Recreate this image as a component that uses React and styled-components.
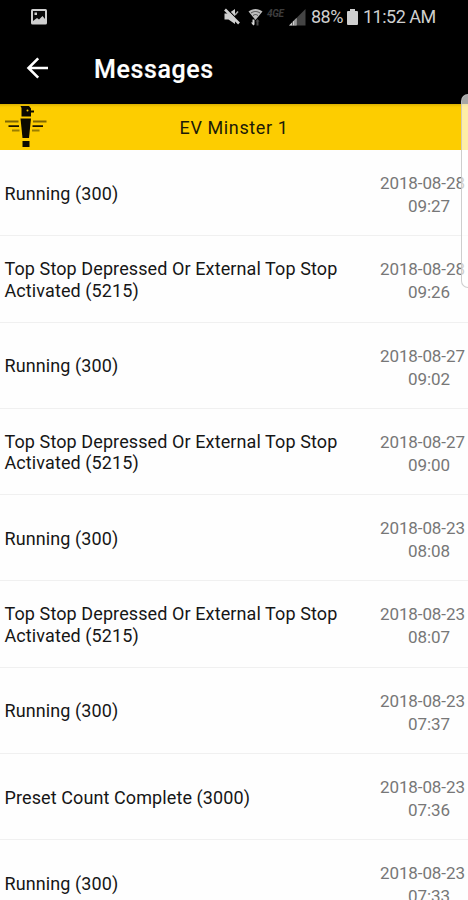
import React from 'react';
import styled, { createGlobalStyle } from 'styled-components';

const GlobalStyle = createGlobalStyle`
  * {
    box-sizing: border-box;
  }

  html, body {
    margin: 0;
    overflow: hidden;
    background: #fff;
  }
`;

const Screen = styled.div`
  position: relative;
  width: 468px;
  height: 900px;
  overflow: hidden;
  background: #fefefe;
  font-family: Roboto, sans-serif;
`;

const StatusBar = styled.div`
  display: flex;
  align-items: center;
  justify-content: space-between;
  height: 34px;
  padding: 0 32px 0 30px;
  background: #000;
  color: #cfcfcf;

  svg {
    display: block;
    flex: none;
  }
`;

const StatusGroup = styled.div`
  display: flex;
  align-items: center;
`;

const StatusIcon = styled.span`
  margin-right: ${({ $gap }) => $gap}px;
`;

const StatusText = styled.span`
  width: ${({ $width }) => $width}px;
  font-size: 18px;
  line-height: 20px;
  letter-spacing: -0.5px;
  white-space: nowrap;
`;

const NetworkLabel = styled.span`
  width: 20px;
  margin: 0 2px 7px 0;
  color: #3d3d3d;
  font-size: 10px;
  font-style: italic;
  font-weight: 700;
  line-height: 9px;
  letter-spacing: -0.3px;
`;

const AppBar = styled.header`
  display: flex;
  align-items: center;
  height: 70px;
  padding: 0 0 0 26px;
  background: #000;
  color: #fff;
`;

const BackButton = styled.button`
  width: 24px;
  height: 24px;
  margin: 0 44px 2px 0;
  padding: 0;
  border: 0;
  background: none;
  color: inherit;

  svg {
    display: block;
  }
`;

const Title = styled.h1`
  margin: 1px 0 0;
  font-size: 25px;
  font-weight: 500;
  line-height: 30px;
  letter-spacing: 0.6px;
  -webkit-text-stroke: 0.2px currentColor;
`;

const MachineBar = styled.div`
  display: grid;
  grid-template-columns: 50px 1fr 50px;
  align-items: center;
  height: 46px;
  background: linear-gradient(#d9b000, #fbcb00 3px, #fdcd00 6px);
  color: #1c1a08;

  svg {
    display: block;
  }
`;

const MachineName = styled.div`
  padding-top: 2px;
  font-size: 18px;
  line-height: 22px;
  letter-spacing: 0.6px;
  text-align: center;
`;

const MessageList = styled.ul`
  margin: 0;
  padding: 0;
  list-style: none;
`;

const MessageRow = styled.li`
  display: flex;
  align-items: center;
  justify-content: space-between;
  height: 86.25px;
  padding-left: 4.5px;
  border-bottom: 1px solid #f0f0f0;
`;

const MessageText = styled.div`
  width: 350px;
  padding-top: 2px;
  color: #161616;
  font-size: 18px;
  line-height: 21.5px;
  letter-spacing: 0.1px;
`;

const MessageTime = styled.time`
  display: flex;
  flex-direction: column;
  width: 88px;
  padding-top: 5px;
  color: #777;
  font-size: 17px;
  line-height: 23px;
  letter-spacing: -0.1px;
`;

const Clock = styled.span`
  padding-left: 28px;
`;

const EdgeHandle = styled.div`
  position: absolute;
  top: 94px;
  right: -10px;
  width: 17px;
  height: 194px;
  border: 1.5px solid rgba(190, 190, 190, 0.75);
  border-radius: 7px;
  background: rgba(255, 255, 255, 0.65);
`;

const messages = [
  { text: 'Running (300)', date: '2018-08-28', time: '09:27' },
  { text: 'Top Stop Depressed Or External Top Stop Activated (5215)', date: '2018-08-28', time: '09:26' },
  { text: 'Running (300)', date: '2018-08-27', time: '09:02' },
  { text: 'Top Stop Depressed Or External Top Stop Activated (5215)', date: '2018-08-27', time: '09:00' },
  { text: 'Running (300)', date: '2018-08-23', time: '08:08' },
  { text: 'Top Stop Depressed Or External Top Stop Activated (5215)', date: '2018-08-23', time: '08:07' },
  { text: 'Running (300)', date: '2018-08-23', time: '07:37' },
  { text: 'Preset Count Complete (3000)', date: '2018-08-23', time: '07:36' },
  { text: 'Running (300)', date: '2018-08-23', time: '07:33' },
];

const PictureIcon = () => (
  <svg width="18" height="17" viewBox="0 0 18 17">
    <rect x="1" y="0" width="16" height="15.5" rx="1.5" fill="#cfcfcf" />
    <path d="M3 2h12v8l-2.500-3-3.500 3.500-2-1.500-4 3z" fill="#0a0a0a" />
    <path d="M4.500 3.500h2.500v2.500h-2.500z" fill="#cfcfcf" />
  </svg>
);

const MuteIcon = () => (
  <svg width="17" height="18" viewBox="0 0 17 18">
    <path d="M1.500 5.500h4l6.500-4.500v15l-6.500-4.500h-4z" fill="#cfcfcf" />
    <path d="M4 1l13 13" stroke="#000" strokeWidth="1.200" />
    <path d="M2 1.500l14 14" stroke="#cfcfcf" strokeWidth="2.600" />
    <path d="M12 7l3-3.500" stroke="#aaa" strokeWidth="1.500" />
  </svg>
);

const WifiIcon = () => (
  <svg width="15" height="18" viewBox="0 0 15 18">
    <path d="M.5 3.500C4.500 0 10.500 0 14.500 3.500L7.500 12z" fill="#bdbdbd" />
    <path d="M3 5c3-2 6-2 9 0M5 7.500c2-1.300 3-1.300 5 0" stroke="#333" strokeWidth=".8" fill="none" />
    <path d="M4.500 11.500v3H3l2.300 3 1.200-1v-5z" fill="#d8d8d8" />
    <path d="M8.500 17.500v-4H7.500l2-2.500 2 2.500h-1v4z" fill="#4a4a4a" />
  </svg>
);

const SignalIcon = () => (
  <svg width="17" height="17" viewBox="0 0 17 17">
    <path d="M16.500 0v16.500H0z" fill="#444" />
    <path d="M7.500 9v7.500H0z" fill="#cfcfcf" />
    <path d="M3.500 12v4.500M6 10v6.500" stroke="#222" strokeWidth=".6" />
  </svg>
);

const BatteryIcon = () => (
  <svg width="11" height="17" viewBox="0 0 11 17">
    <path d="M3 0h5v2h2q1 0 1 1v12q0 1-1 1H1q-1 0-1-1V3q0-1 1-1h2z" fill="#cfcfcf" />
  </svg>
);

const BackArrow = () => (
  <svg width="24" height="24" viewBox="0 0 24 24" fill="none" stroke="currentColor" strokeWidth="2.600">
    <path d="M22 12H3M12.200 2.300L2.500 12l9.700 9.700" />
  </svg>
);

// Bird head on top of an exclamation mark, with speed lines as wings
const MinsterLogo = () => (
  <svg width="50" height="46" viewBox="0 0 50 46">
    <path d="M20.500 2h8.500l2 2.500V6.500h3v2h-3v4h-9.500V4z" fill="#0c0a00" />
    <circle cx="27.500" cy="6.500" r="1" fill="#fdcd00" />
    <path d="M20.500 14.500h10.500l-2 19.500h-6.500z" fill="#0c0a00" />
    <path d="M22.500 37h7v6h-7z" fill="#0c0a00" />
    <path d="M5 17.500h13.500M33 17.500h13.500" stroke="#806800" strokeWidth="2" />
    <path d="M8.500 22.200h10.500M32.500 22.200h10.500" stroke="#181300" strokeWidth="1.800" />
    <path d="M12 26.500h7.500M32 26.500h7.500" stroke="#9b7e00" strokeWidth="2" />
  </svg>
);

function App() {
  return (
    <Screen>
      <GlobalStyle />

      <StatusBar>
        <PictureIcon />
        <StatusGroup>
          <StatusIcon $gap={8}><MuteIcon /></StatusIcon>
          <StatusIcon $gap={4}><WifiIcon /></StatusIcon>
          <NetworkLabel>4GE</NetworkLabel>
          <StatusIcon $gap={5}><SignalIcon /></StatusIcon>
          <StatusText $width={36}>88%</StatusText>
          <StatusIcon $gap={5}><BatteryIcon /></StatusIcon>
          <StatusText $width={73}>11:52 AM</StatusText>
        </StatusGroup>
      </StatusBar>

      <AppBar>
        <BackButton aria-label="Back">
          <BackArrow />
        </BackButton>
        <Title>Messages</Title>
      </AppBar>

      <MachineBar>
        <MinsterLogo />
        <MachineName>EV Minster 1</MachineName>
      </MachineBar>

      <MessageList>
        {messages.map((message) => (
          <MessageRow key={`${message.date} ${message.time}`}>
            <MessageText>{message.text}</MessageText>
            <MessageTime>
              <span>{message.date}</span>
              <Clock>{message.time}</Clock>
            </MessageTime>
          </MessageRow>
        ))}
      </MessageList>

      <EdgeHandle />
    </Screen>
  );
}

export default App;
